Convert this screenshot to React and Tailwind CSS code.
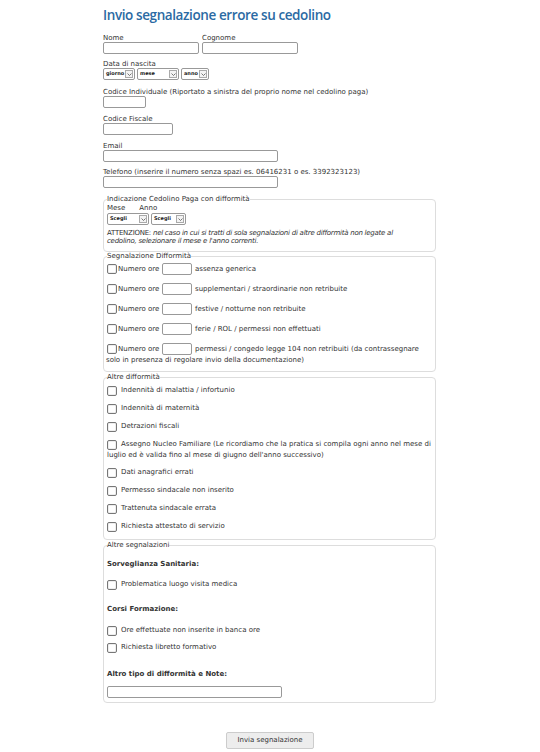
import React from "react";

const Box = () => (
  <span className="inline-block w-[10px] h-[10px] border border-[#777] rounded-[2px] bg-white shadow-[inset_0_0_0_1px_#eee] shrink-0" />
);

const Input = ({ w }) => (
  <div className={`h-[12px] border border-[#999] rounded-[2px] bg-white ${w}`} />
);

const Select = ({ w, text }) => (
  <div className={`h-[12px] border border-[#999] rounded-[2px] bg-white flex items-center justify-between pl-[2px] pr-[1px] ${w}`}>
    <span className="text-[5px] font-bold text-[#222]">{text}</span>
    <span className="w-[8px] h-[8px] border border-[#aaa] bg-[#f3f3f3] flex items-center justify-center">
      <svg width="5" height="3" viewBox="0 0 5 3"><path d="M0.5 0.5 L2.5 2.5 L4.5 0.5" stroke="#555" strokeWidth="0.8" fill="none" /></svg>
    </span>
  </div>
);

const Label = ({ children, cls = "" }) => <div className={`leading-[8px] ${cls}`}>{children}</div>;

const NumRow = ({ text, extra }) => (
  <div>
    <div className="flex items-center h-[12px]">
      <Box />
      <span className="ml-[1px] w-[44px] whitespace-nowrap">Numero ore</span>
      <span className="w-[30px] h-[12px] border border-[#999] rounded-[2px] bg-white shrink-0" />
      <span className="ml-[3px] whitespace-nowrap">{text}</span>
    </div>
    {extra && <div className="leading-[9px] mt-[1px] -ml-[1px]">{extra}</div>}
  </div>
);

const CheckRow = ({ text, extra }) => (
  <div>
    <div className="flex items-center h-[11px]">
      <Box />
      <span className="ml-[4px] whitespace-nowrap">{text}</span>
    </div>
    {extra && <div className="leading-[9px] mt-[1px]">{extra}</div>}
  </div>
);

const FS = ({ legend, children, cls = "" }) => (
  <fieldset className={`border border-[#ddd] rounded-[4px] w-[333px] px-[3px] ${cls}`}>
    <legend className="px-0 leading-[8px] text-[7px]">{legend}</legend>
    {children}
  </fieldset>
);

export default function App() {
  return (
    <div className="w-[540px] h-[752px] bg-white text-[#333] font-['DejaVu_Sans',sans-serif] text-[7px] overflow-hidden">
      <div className="pl-[103px] pt-[6px]">
        <div className="font-['Open_Sans',sans-serif] font-semibold text-[13.5px] leading-[18px] text-[#2b6aa3] tracking-[-0.4px]">
          Invio segnalazione errore su cedolino
        </div>

        <div className="flex gap-[3px] mt-[10px]">
          <div>
            <Label>Nome</Label>
            <Input w="w-[96px]" />
          </div>
          <div>
            <Label>Cognome</Label>
            <Input w="w-[96px]" />
          </div>
        </div>

        <Label cls="mt-[6px]">Data di nascita</Label>
        <div className="flex gap-[2px]">
          <Select w="w-[32px]" text="giorno" />
          <Select w="w-[42px]" text="mese" />
          <Select w="w-[28px]" text="anno" />
        </div>

        <Label cls="mt-[8px]">Codice Individuale (Riportato a sinistra del proprio nome nel cedolino paga)</Label>
        <Input w="w-[43px]" />

        <Label cls="mt-[7px]">Codice Fiscale</Label>
        <Input w="w-[70px]" />

        <Label cls="mt-[7px]">Email</Label>
        <Input w="w-[175px]" />

        <Label cls="mt-[6px]">Telefono (inserire il numero senza spazi es. 06416231 o es. 3392323123)</Label>
        <Input w="w-[175px]" />

        <FS legend="Indicazione Cedolino Paga con difformità" cls="mt-[7px] pb-[6px]">
          <div className="flex gap-[14px] leading-[8px] mt-[1px]">
            <span>Mese</span>
            <span>Anno</span>
          </div>
          <div className="flex gap-[2px] mt-[1px]">
            <Select w="w-[42px]" text="Scegli" />
            <Select w="w-[35px]" text="Scegli" />
          </div>
          <div className="leading-[8px] mt-[4px] tracking-[-0.25px] whitespace-nowrap">
            ATTENZIONE: <i>nel caso in cui si tratti di sola segnalazioni di altre difformità non legate al</i>
          </div>
          <div className="leading-[8px] tracking-[-0.25px] italic whitespace-nowrap">
            cedolino, selezionare il mese e l'anno correnti.
          </div>
        </FS>

        <FS legend="Segnalazione Difformità" cls="mt-[0px] pb-[6px]">
          <div className="flex flex-col gap-[8px] mt-[3px]">
            <NumRow text="assenza generica" />
            <NumRow text="supplementari / straordinarie non retribuite" />
            <NumRow text="festive / notturne non retribuite" />
            <NumRow text="ferie / ROL / permessi non effettuati" />
            <NumRow text="permessi / congedo legge 104 non retribuiti (da contrassegnare" extra="solo in presenza di regolare invio della documentazione)" />
          </div>
        </FS>

        <FS legend="Altre difformità" cls="mt-[1px] pb-[7px]">
          <div className="flex flex-col gap-[7px] mt-[4px]">
            <CheckRow text="Indennità di malattia / infortunio" />
            <CheckRow text="Indennità di maternità" />
            <CheckRow text="Detrazioni fiscali" />
            <CheckRow text="Assegno Nucleo Familiare (Le ricordiamo che la pratica si compila ogni anno nel mese di" extra="luglio ed è valida fino al mese di giugno dell'anno successivo)" />
            <CheckRow text="Dati anagrafici errati" />
            <CheckRow text="Permesso sindacale non inserito" />
            <CheckRow text="Trattenuta sindacale errata" />
            <CheckRow text="Richiesta attestato di servizio" />
          </div>
        </FS>

        <FS legend="Altre segnalazioni" cls="mt-[1px] pb-[4px]">
          <div className="font-bold leading-[8px] mt-[11px]">Sorveglianza Sanitaria:</div>
          <div className="mt-[11px]"><CheckRow text="Problematica luogo visita medica" /></div>
          <div className="font-bold leading-[8px] mt-[15px]">Corsi Formazione:</div>
          <div className="mt-[12px]"><CheckRow text="Ore effettuate non inserite in banca ore" /></div>
          <div className="mt-[6px]"><CheckRow text="Richiesta libretto formativo" /></div>
          <div className="font-bold leading-[8px] mt-[17px]">Altro tipo di difformità e Note:</div>
          <div className="mt-[8px] w-[175px] h-[12px] border border-[#999] rounded-[2px] bg-white" />
        </FS>

        <div className="mt-[29px] ml-[123px]">
          <div className="w-[88px] h-[17px] border border-[#ccc] rounded-[2px] bg-[#ededed] flex items-center justify-center text-[7px] text-[#333]">
            Invia segnalazione
          </div>
        </div>
      </div>
    </div>
  );
}
